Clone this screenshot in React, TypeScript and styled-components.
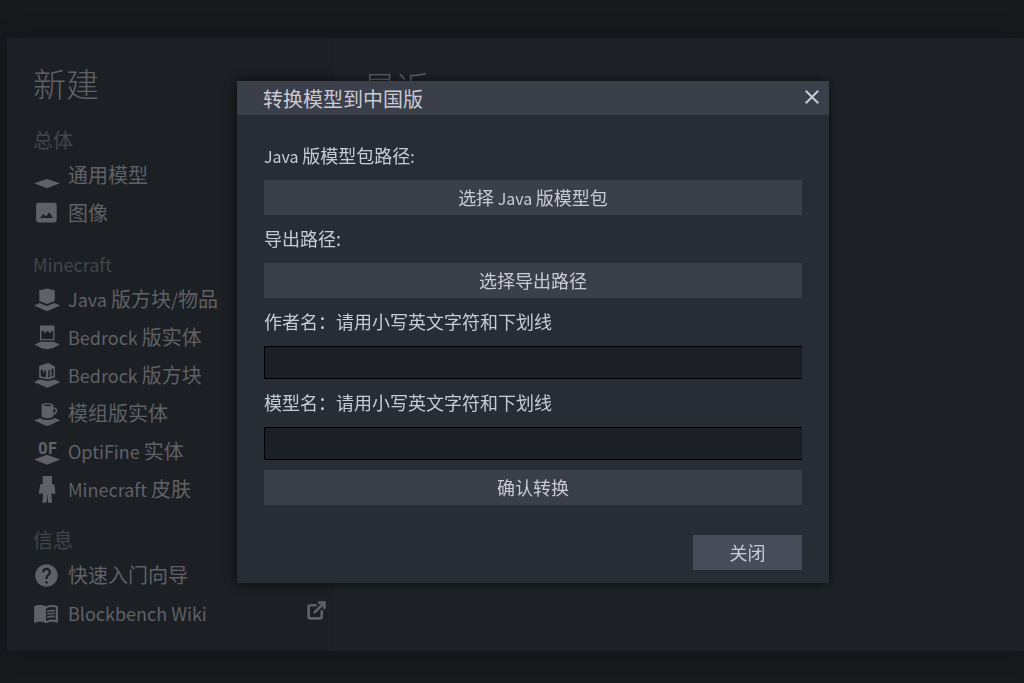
import React from "react";
import styled, { createGlobalStyle } from "styled-components";
import { MdClose, MdHelp, MdMenuBook } from "react-icons/md";
import { ExternalLink } from "lucide-react";

const color = {
  page: "#18191c",
  sidebar: "#1c1f23",
  content: "#1e2226",
  muted: "#606167",
  faint: "#434549",
  dialog: "#282c34",
  button: "#3b3f4a",
  selected: "#474c5b",
  field: "#1c1f26",
  text: "#cacad4",
};

const GlobalStyle = createGlobalStyle`
  * { box-sizing: border-box; }
  body {
    margin: 0;
    background: ${color.page};
    color: ${color.text};
    font-family: "Noto Sans CJK SC", "Noto Sans", sans-serif;
    font-size: 18px;
  }
  h1, h2, h3, p, ul { margin: 0; padding: 0; font-weight: 400; }
  button, input { font: inherit; color: inherit; }
`;

const Page = styled.div`
  min-height: 100vh;
  padding: 38px 0 32px 7px;
  display: flex;
`;

const StartScreen = styled.main`
  flex: 1;
  display: flex;
  box-shadow: 0 0 24px rgba(0, 0, 0, 0.16);
`;

const Sidebar = styled.nav`
  width: 327px;
  flex-shrink: 0;
  padding: 20px 7px 18px 26px;
  display: flex;
  flex-direction: column;
  gap: 16px;
  background: ${color.sidebar};
`;

const Recent = styled.section`
  flex: 1;
  padding: 24px 29px;
  background: ${color.content};
`;

const PageTitle = styled.h1`
  font-size: 33px;
  line-height: 50px;
  font-weight: 300;
  color: ${color.muted};
`;

const GroupTitle = styled.h2`
  font-size: 20px;
  line-height: 32px;
  color: ${color.faint};
`;

const FormatList = styled.ul`
  list-style: none;
`;

const FormatLink = styled.a`
  height: 38px;
  display: flex;
  align-items: center;
  gap: 7px;
  font-size: 20px;
  color: ${color.muted};
  text-decoration: none;
`;

const IconSlot = styled.span`
  width: 28px;
  height: 28px;
  flex-shrink: 0;
  display: flex;
  align-items: center;
`;

const FormatName = styled.span`
  flex: 1;
  line-height: 30px;
`;

const ExternalMark = styled(ExternalLink)`
  margin-bottom: 6px;
`;

/* Latin letters run smaller than the Han characters beside them. */
const Latin = styled.span<{ $size: number }>`
  font-size: ${(p) => p.$size}px;
`;

const Overlay = styled.div`
  position: fixed;
  inset: 0;
  padding: 81px 0 0 42px;
  display: flex;
  justify-content: center;
  align-items: flex-start;
`;

const Dialog = styled.section`
  width: 592px;
  max-width: 100%;
  background: ${color.dialog};
  box-shadow: 0 0 10px rgba(0, 0, 0, 0.7);
`;

const DialogHeader = styled.header`
  height: 34px;
  padding: 0 3px 0 26px;
  display: flex;
  align-items: flex-start;
  justify-content: space-between;
  background: ${color.button};
`;

const DialogTitle = styled.h2`
  font-size: 20px;
  line-height: 36px;
`;

const CloseIconButton = styled.button`
  width: 28px;
  height: 32px;
  padding: 0;
  border: 0;
  background: none;
  display: flex;
  align-items: center;
  justify-content: center;
`;

const DialogBody = styled.form`
  padding: 27px 27px 13px;
  display: flex;
  flex-direction: column;
  gap: 10px;
`;

const Label = styled.label`
  height: 28px;
  line-height: 26px;
`;

const Button = styled.button`
  height: 35px;
  padding: 0;
  border: 0;
  line-height: 35px;
  background: ${color.button};
`;

const TextField = styled.input`
  height: 33px;
  width: 100%;
  padding: 0 8px;
  border: 1px solid #000;
  border-right: 0;
  border-radius: 0;
  background: ${color.field};
`;

const DialogFooter = styled.footer`
  padding-top: 20px;
  display: flex;
  justify-content: flex-end;
`;

const DismissButton = styled(Button)`
  width: 109px;
  background: ${color.selected};
`;

function MixedText({ text, latinSize }: { text: string; latinSize: number }) {
  return (
    <>
      {text.split(/([\x20-\x7e]+)/).map((part, i) =>
        i % 2 === 1 ? (
          <Latin key={i} $size={latinSize}>
            {part}
          </Latin>
        ) : (
          part
        ),
      )}
    </>
  );
}

function FormatIcon({ children }: { children: React.ReactNode }) {
  return (
    <svg width="28" height="28" viewBox="0 0 28 28" fill="currentColor" aria-hidden="true">
      {children}
    </svg>
  );
}

const GenericIcon = () => (
  <FormatIcon>
    <path d="M1 22.3 14 18l13 4.3L14 27.3z" />
  </FormatIcon>
);

const ImageIcon = () => (
  <FormatIcon>
    <path
      fillRule="evenodd"
      d="M5.500 3.700h15.800a2.400 2.400 0 0 1 2.400 2.400v14.900a2.400 2.400 0 0 1-2.400 2.400H5.500a2.400 2.400 0 0 1-2.400-2.400V6.100a2.400 2.400 0 0 1 2.400-2.400zM6.800 19h13.400l-4-5.500-3.300 4-2.400-2.600z"
    />
  </FormatIcon>
);

const JavaBlockIcon = () => (
  <FormatIcon>
    <path d="M14 3.400 21.800 5.300V16L14 19 6.300 16V5.300z" />
    <path d="M1 20.500 6.500 18 14 20.900l7.500-2.900 5.700 2.500L14 26.300z" />
  </FormatIcon>
);

const BedrockEntityIcon = () => (
  <FormatIcon>
    <path
      fillRule="evenodd"
      d="M7 2.500h14.500v14.800H7zM8.400 8v7.900h11.700V8h-1.700v1.600h-2.800V8.300h-2.800v1.600h-1.600V8z"
    />
    <path d="M1.700 21.500 7.500 18.700h13.200l6 2.800-6.500 3.500c-4 1.500-8.200 1.500-12.200 0z" />
  </FormatIcon>
);

const BedrockBlockIcon = () => (
  <FormatIcon>
    <path
      fillRule="evenodd"
      d="M6.200 4.800 15.500 2l6.500 3.600v11L15.500 18.500l-9.300-1.800zM7.800 8.600v6.700l5.200.9V9.400l-1.500-.3v2.300l-1.600-.3V8.900zM15.300 9.200v7.500l1.500-.4V8.700zM18.500 8v7.700l2-.7V7.200z"
    />
    <path d="M1 21.300 6 18.600 15 20.100l7-1.700 5.200 2.900L14.500 26.800z" />
  </FormatIcon>
);

const ModdedEntityIcon = () => (
  <FormatIcon>
    <path
      fillRule="evenodd"
      d="M8.600 6c0-2.200 11.700-2.200 11.700 0v11.300c-2 2.500-9.700 2.500-11.700 0zM10.500 6.300c1.500 1.200 6.500 1.200 8 0-1.500-1.100-6.500-1.100-8 0z"
    />
    <path d="M20 9.300c4.500-1.400 4.600 5.300 0 5.800" fill="none" stroke="currentColor" strokeWidth="1.600" />
    <path d="M1 21.300 7.400 19c2.500 2.600 11.500 2.600 14 0l5.900 2.300-9 4.200c-2.500 1.500-6 1.500-8.300 0z" />
  </FormatIcon>
);

const OptiFineIcon = () => (
  <FormatIcon>
    <text x="5" y="17" fontFamily="DejaVu Sans Mono, monospace" fontWeight="700" fontSize="16">
      OF
    </text>
    <path d="M1 22.600 14 17.800l13.200 4.800L14 27.800z" />
  </FormatIcon>
);

const SkinIcon = () => (
  <FormatIcon>
    <path d="M9.700 1h9.300v8.300h2.300l1.200 9.500h-3.800l-.600-2.500.900 11.500h-4l-.800-9-.8 9H9.400l.900-11.500-.6 2.500H5.800L7.200 9.300h2.500z" />
  </FormatIcon>
);

const groups = [
  {
    title: "总体",
    items: [
      { name: "通用模型", icon: <GenericIcon /> },
      { name: "图像", icon: <ImageIcon /> },
    ],
  },
  {
    title: "Minecraft",
    items: [
      { name: "Java 版方块/物品", icon: <JavaBlockIcon /> },
      { name: "Bedrock 版实体", icon: <BedrockEntityIcon /> },
      { name: "Bedrock 版方块", icon: <BedrockBlockIcon /> },
      { name: "模组版实体", icon: <ModdedEntityIcon /> },
      { name: "OptiFine 实体", icon: <OptiFineIcon /> },
      { name: "Minecraft 皮肤", icon: <SkinIcon /> },
    ],
  },
  {
    title: "信息",
    items: [
      { name: "快速入门向导", icon: <MdHelp size={27} /> },
      { name: "Blockbench Wiki", icon: <MdMenuBook size={26} />, external: true },
    ],
  },
];

export default function App() {
  return (
    <>
      <GlobalStyle />
      <Page>
        <StartScreen>
          <Sidebar>
            <PageTitle>新建</PageTitle>
            {groups.map((group) => (
              <section key={group.title}>
                <GroupTitle>
                  <MixedText text={group.title} latinSize={18} />
                </GroupTitle>
                <FormatList>
                  {group.items.map((item) => (
                    <li key={item.name}>
                      <FormatLink href="#">
                        <IconSlot>{item.icon}</IconSlot>
                        <FormatName>
                          <MixedText text={item.name} latinSize={18} />
                        </FormatName>
                        {"external" in item && <ExternalMark size={21} strokeWidth={3} />}
                      </FormatLink>
                    </li>
                  ))}
                </FormatList>
              </section>
            ))}
          </Sidebar>
          <Recent>
            <PageTitle as="h2">最近</PageTitle>
          </Recent>
        </StartScreen>
      </Page>
      <Overlay>
        <Dialog role="dialog" aria-labelledby="dialog-title">
          <DialogHeader>
            <DialogTitle id="dialog-title">转换模型到中国版</DialogTitle>
            <CloseIconButton type="button" aria-label="关闭窗口">
              <MdClose size={24} />
            </CloseIconButton>
          </DialogHeader>
          <DialogBody onSubmit={(event) => event.preventDefault()}>
            <Label htmlFor="source">
              <MixedText text="Java 版模型包路径:" latinSize={16} />
            </Label>
            <Button id="source" type="button">
              <MixedText text="选择 Java 版模型包" latinSize={16} />
            </Button>
            <Label htmlFor="target">导出路径:</Label>
            <Button id="target" type="button">选择导出路径</Button>
            <Label htmlFor="author">作者名：请用小写英文字符和下划线</Label>
            <TextField id="author" type="text" />
            <Label htmlFor="model">模型名：请用小写英文字符和下划线</Label>
            <TextField id="model" type="text" />
            <Button type="submit">确认转换</Button>
            <DialogFooter>
              <DismissButton type="button">关闭</DismissButton>
            </DialogFooter>
          </DialogBody>
        </Dialog>
      </Overlay>
    </>
  );
}
